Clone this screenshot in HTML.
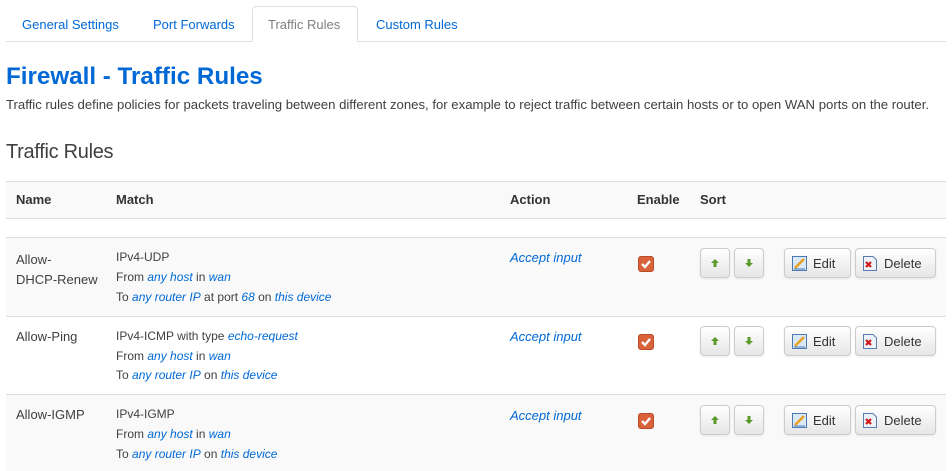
<!DOCTYPE html>
<html><head><meta charset="utf-8"><style>
*{margin:0;padding:0;box-sizing:border-box}
body{width:952px;height:471px;overflow:hidden;background:#fff;font-family:"Liberation Sans",sans-serif;color:#404040;position:relative}
.a{position:absolute;white-space:nowrap}
.tab{font-size:13px;color:#0069d6;top:17px}
a,.l{color:#0069d6;font-style:italic;text-decoration:none}
.m{font-size:12px;color:#404040}
.row{position:absolute;left:6px;width:940px;border-top:1px solid #ddd}
.btn{position:absolute;height:30px;border:1px solid #ccc;border-radius:4px;background:linear-gradient(#fff,#e6e6e6);box-shadow:0 1px 2px rgba(0,0,0,.08)}
.sm{width:30px}
.chk{position:absolute;width:16px;height:16px;border-radius:3px;background:#d9623a;border:1px solid #b84a25}
.tx{font-size:13px;color:#333;position:absolute;top:7px}
</style></head><body>
<div class="a" style="left:6px;top:41px;width:940px;border-top:1px solid #ddd"></div>
<div class="a" style="left:252px;top:6px;width:106px;height:36px;border:1px solid #ddd;border-bottom:1px solid #fff;border-radius:4px 4px 0 0;background:#fff"></div>
<div class="a tab" style="left:22px">General Settings</div>
<div class="a tab" style="left:153px">Port Forwards</div>
<div class="a tab" style="left:268px;color:#808080">Traffic Rules</div>
<div class="a tab" style="left:376px">Custom Rules</div>
<div class="a" style="left:6px;top:63px;font-size:24.2px;font-weight:bold;color:#0069d6">Firewall - Traffic Rules</div>
<div class="a" style="left:6px;top:97px;font-size:13.15px;color:#404040">Traffic rules define policies for packets traveling between different zones, for example to reject traffic between certain hosts or to open WAN ports on the router.</div>
<div class="a" style="left:6px;top:141px;font-size:20px;color:#404040;letter-spacing:-0.3px">Traffic Rules</div>

<div class="row" style="top:181px;height:38px;background:#f9f9f9;border-bottom:1px solid #ddd"></div>
<div class="a" style="top:192px;left:16px;font-size:13px;font-weight:bold;color:#333">Name</div>
<div class="a" style="top:192px;left:116px;font-size:13px;font-weight:bold;color:#333">Match</div>
<div class="a" style="top:192px;left:510px;font-size:13px;font-weight:bold;color:#333">Action</div>
<div class="a" style="top:192px;left:637px;font-size:13px;font-weight:bold;color:#333">Enable</div>
<div class="a" style="top:192px;left:700px;font-size:13px;font-weight:bold;color:#333">Sort</div>

<div class="row" style="top:237px;height:79px;background:#f9f9f9"></div>
<div class="row" style="top:316px;height:78px;background:#fff"></div>
<div class="row" style="top:394px;height:77px;background:#f9f9f9"></div>

<div class="a" style="left:16px;top:250px;font-size:13px;line-height:20px">Allow-<br>DHCP-Renew</div>
<div class="a m" style="left:116px;top:250px">IPv4-UDP</div>
<div class="a m" style="left:116px;top:270px">From <span class="l">any host</span> in <span class="l">wan</span></div>
<div class="a m" style="left:116px;top:290px">To <span class="l">any router IP</span> at port <span class="l">68</span> on <span class="l">this device</span></div>
<div class="a l" style="left:510px;top:250px;font-size:13px">Accept input</div>

<div class="a" style="left:16px;top:329px;font-size:13px">Allow-Ping</div>
<div class="a m" style="left:116px;top:329px">IPv4-ICMP with type <span class="l">echo-request</span></div>
<div class="a m" style="left:116px;top:349px">From <span class="l">any host</span> in <span class="l">wan</span></div>
<div class="a m" style="left:116px;top:368px">To <span class="l">any router IP</span> on <span class="l">this device</span></div>
<div class="a l" style="left:510px;top:329px;font-size:13px">Accept input</div>

<div class="a" style="left:16px;top:407px;font-size:13px">Allow-IGMP</div>
<div class="a m" style="left:116px;top:407px">IPv4-IGMP</div>
<div class="a m" style="left:116px;top:427px">From <span class="l">any host</span> in <span class="l">wan</span></div>
<div class="a m" style="left:116px;top:447px">To <span class="l">any router IP</span> on <span class="l">this device</span></div>
<div class="a l" style="left:510px;top:408px;font-size:13px">Accept input</div>

<div id="ctl"></div>
<script>
var ys=[248,326,405],h='';
ys.forEach(function(y){
h+='<div class="chk" style="left:638px;top:'+(y+8)+'px"><svg width="14" height="14" viewBox="0 0 14 14"><path d="M3 7l3 3 5-6" stroke="#fff" stroke-width="2.3" fill="none"/></svg></div>';
h+='<div class="btn sm" style="left:700px;top:'+y+'px"><svg style="position:absolute;left:10px;top:10px" width="8" height="8" viewBox="0 0 8 8"><path d="M4 0L8 4H5.5V8H2.5V4H0Z" fill="#5a9a2a"/></svg></div>';
h+='<div class="btn sm" style="left:734px;top:'+y+'px"><svg style="position:absolute;left:10px;top:10px" width="8" height="8" viewBox="0 0 8 8"><path d="M4 8L8 4H5.5V0H2.5V4H0Z" fill="#5a9a2a"/></svg></div>';
h+='<div class="btn" style="left:784px;top:'+y+'px;width:67px"><svg style="position:absolute;left:7px;top:7px" width="15" height="15" viewBox="0 0 15 15"><rect x="0.5" y="0.5" width="14" height="14" fill="#dbe8f5" stroke="#4a7ab5"/><path d="M3 12L12 3" stroke="#e8a020" stroke-width="2.5"/><path d="M2 13h11" stroke="#4a7ab5"/></svg><span class="tx" style="left:28px">Edit</span></div>';
h+='<div class="btn" style="left:855px;top:'+y+'px;width:81px"><svg style="position:absolute;left:7px;top:7px" width="14" height="15" viewBox="0 0 14 15"><path d="M0.5 0.5H10L13.5 4V14.5H0.5Z" fill="#eef3fa" stroke="#5a7ab0"/><path d="M3 6l5 5M8 6l-5 5" stroke="#d01818" stroke-width="2.2"/></svg><span class="tx" style="left:28px">Delete</span></div>';
});
document.getElementById('ctl').innerHTML=h;
</script>
</body></html>
